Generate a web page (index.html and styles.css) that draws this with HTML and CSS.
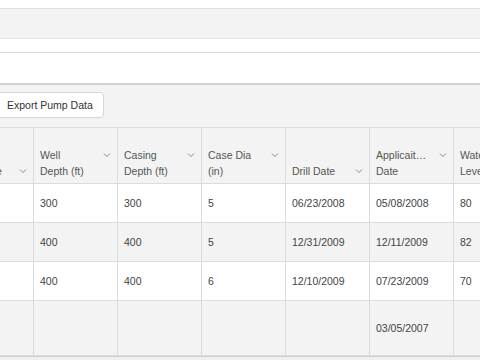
FILE: index.html
```html
<!DOCTYPE html>
<html lang="en">
<head>
<meta charset="utf-8">
<title>Pump Data</title>
<link rel="stylesheet" href="styles.css">
</head>
<body>
<div class="top-gap"></div>
<div class="toolbar"></div>
<div class="strip"></div>
<div class="search"></div>
<div class="panel">
  <div class="actions"><button class="btn" type="button">Export Pump Data</button></div>
  <div class="grid">
    <div class="row head">
      <div class="cell hcell"><div class="hwrap"><div class="label"><span>Well Type</span></div><svg class="chev" viewBox="0 0 8 16" width="8" height="16"><path d="M1 6.5 L4 9.5 L7 6.5"/></svg></div></div>
      <div class="cell hcell"><div class="hwrap"><div class="label"><span>Well</span><span>Depth (ft)</span></div><svg class="chev" viewBox="0 0 8 16" width="8" height="16"><path d="M1 6.5 L4 9.5 L7 6.5"/></svg></div></div>
      <div class="cell hcell"><div class="hwrap"><div class="label"><span>Casing</span><span>Depth (ft)</span></div><svg class="chev" viewBox="0 0 8 16" width="8" height="16"><path d="M1 6.5 L4 9.5 L7 6.5"/></svg></div></div>
      <div class="cell hcell"><div class="hwrap"><div class="label"><span>Case Dia</span><span>(in)</span></div><svg class="chev" viewBox="0 0 8 16" width="8" height="16"><path d="M1 6.5 L4 9.5 L7 6.5"/></svg></div></div>
      <div class="cell hcell"><div class="hwrap"><div class="label"><span>Drill Date</span></div><svg class="chev" viewBox="0 0 8 16" width="8" height="16"><path d="M1 6.5 L4 9.5 L7 6.5"/></svg></div></div>
      <div class="cell hcell"><div class="hwrap"><div class="label"><span class="clip">Applicaiton</span><span>Date</span></div><svg class="chev" viewBox="0 0 8 16" width="8" height="16"><path d="M1 6.5 L4 9.5 L7 6.5"/></svg></div></div>
      <div class="cell hcell"><div class="hwrap"><div class="label"><span>Water</span><span>Level (ft)</span></div><svg class="chev" viewBox="0 0 8 16" width="8" height="16"><path d="M1 6.5 L4 9.5 L7 6.5"/></svg></div></div>
      <div class="cell hcell"><div class="hwrap"><div class="label"><span>Pump</span><span>Rate</span></div><svg class="chev" viewBox="0 0 8 16" width="8" height="16"><path d="M1 6.5 L4 9.5 L7 6.5"/></svg></div></div>
    </div>
    <div class="row odd">
      <div class="cell"></div><div class="cell">300</div><div class="cell">300</div><div class="cell">5</div><div class="cell">06/23/2008</div><div class="cell">05/08/2008</div><div class="cell">80</div><div class="cell"></div>
    </div>
    <div class="row even">
      <div class="cell"></div><div class="cell">400</div><div class="cell">400</div><div class="cell">5</div><div class="cell">12/31/2009</div><div class="cell">12/11/2009</div><div class="cell">82</div><div class="cell"></div>
    </div>
    <div class="row odd">
      <div class="cell"></div><div class="cell">400</div><div class="cell">400</div><div class="cell">6</div><div class="cell">12/10/2009</div><div class="cell">07/23/2009</div><div class="cell">70</div><div class="cell"></div>
    </div>
    <div class="row even tall">
      <div class="cell"></div><div class="cell"></div><div class="cell"></div><div class="cell"></div><div class="cell"></div><div class="cell">03/05/2007</div><div class="cell"></div><div class="cell"></div>
    </div>
  </div>
  <div class="foot"></div>
</div>
</body>
</html>
```

FILE: styles.css
```css
html, body {
  margin: 0;
  padding: 0;
}
body {
  width: 480px;
  height: 360px;
  overflow: hidden;
  background: #ffffff;
  font-family: "Liberation Sans", Arial, sans-serif;
  font-size: 10.5px;
  color: #444444;
}
.top-gap {
  height: 8px;
}
.toolbar {
  height: 29px;
  background: #f3f3f3;
  border-top: 1px solid #e0e0e0;
  border-bottom: 1px solid #e3e3e3;
}
.strip {
  height: 13px;
  border-bottom: 1px solid #d6d6d6;
}
.search {
  height: 30px;
  border-bottom: 2px solid #d0d0d0;
}
.panel {
  background: #f3f3f3;
  padding-top: 7px;
  height: 300px;
}
.actions {
  margin-left: -4px;
  display: flex;
}
.btn {
  height: 26px;
  padding: 0 10px;
  border: 1px solid #d6d6d6;
  border-radius: 4px;
  background: #ffffff;
  font-family: "Liberation Sans", Arial, sans-serif;
  font-size: 10.5px;
  color: #333333;
}
.grid {
  margin-top: 9px;
  margin-left: -50px;
  width: 672px;
  border-top: 1px solid #dcdcdc;
}
.row {
  display: flex;
  border-bottom: 1px solid #dcdcdc;
}
.head {
  height: 55px;
  background: #f3f3f3;
}
.odd {
  background: #ffffff;
  height: 38px;
}
.even {
  background: #f3f3f3;
  height: 38px;
}
.tall {
  height: 54px;
}
.cell {
  flex: 0 0 84px;
  box-sizing: border-box;
  border-right: 1px solid #dadada;
  padding: 0 6px;
  display: flex;
  align-items: center;
  white-space: nowrap;
}
.hcell {
  align-items: flex-end;
  padding-bottom: 4px;
  color: #555555;
}
.hwrap {
  display: flex;
  align-items: flex-start;
  gap: 12px;
  width: 100%;
  line-height: 16px;
}
.label {
  flex: 1;
  min-width: 0;
  display: flex;
  flex-direction: column;
}
.label span {
  overflow: hidden;
  text-overflow: ellipsis;
  white-space: nowrap;
}
.label .clip {
  max-width: 50.5px;
}
.chev {
  flex: none;
  fill: none;
  stroke: #8a8a8a;
  stroke-width: 1;
}
.foot {
  height: 4px;
  border-top: 1px solid #d0d0d0;
  background: #efefef;
}
```
